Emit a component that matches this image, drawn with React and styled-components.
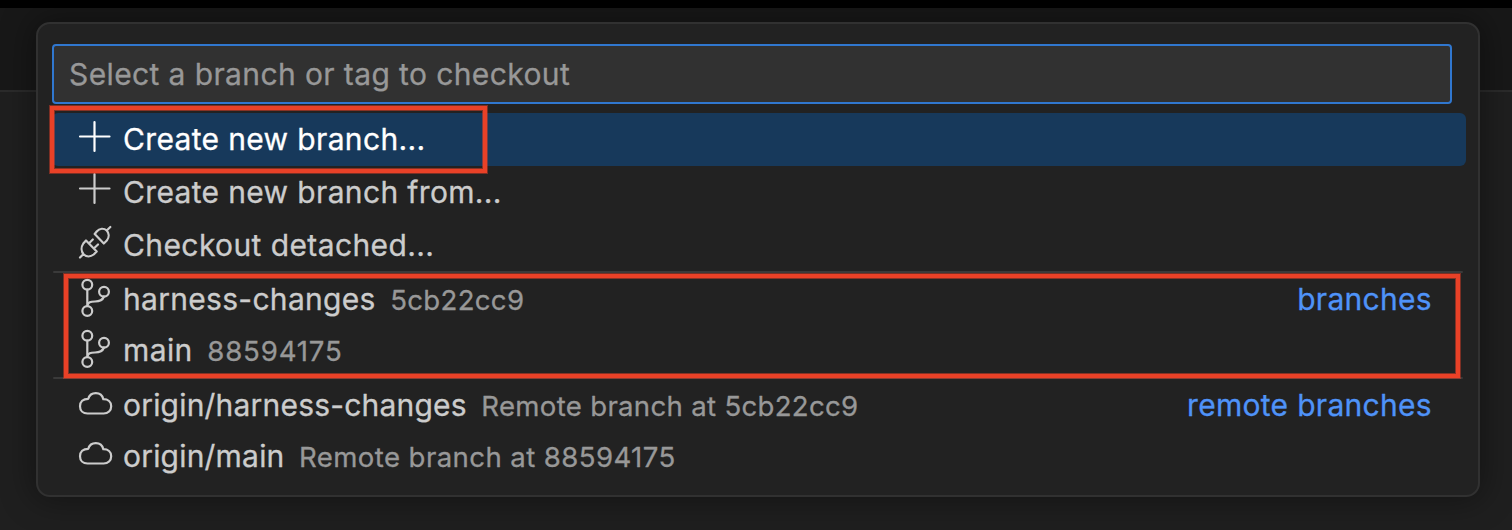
import React from "react";
import styled, { createGlobalStyle } from "styled-components";

const GlobalStyle = createGlobalStyle`
  * { box-sizing: border-box; }
  body {
    margin: 0;
    background: #1f1f1f;
    font-family: Inter, "Liberation Sans", sans-serif;
    font-kerning: normal;
    -webkit-text-stroke: 0.3px currentColor;
  }
`;

const Window = styled.div`
  position: relative;
  height: 530px;
  overflow: hidden;
  background: #1f1f1f;
`;

const TopEdge = styled.div`
  height: 8px;
  background: #000;
`;

const TitleBar = styled.div`
  height: 84px;
  background: #181818;
  border-bottom: 2px solid #2b2b2b;
`;

const Picker = styled.section`
  position: absolute;
  top: 22px;
  left: 36px;
  width: 1444px;
  height: 475px;
  padding: 20px 12px 0 14px;
  background: #222222;
  border: 2px solid #313131;
  border-radius: 14px;
  box-shadow: 0 0 32px 4px rgba(0, 0, 0, 0.36);
`;

const SearchBox = styled.div`
  display: flex;
  align-items: center;
  width: 1400px;
  height: 60px;
  padding: 0 15px;
  background: #313131;
  border: 2px solid #3077cf;
  border-radius: 4px;
  color: #989898;
  font-size: 30px;
  letter-spacing: 0.39px;
`;

const List = styled.div`
  display: flex;
  flex-direction: column;
  margin-top: 9px;
`;

const Row = styled.div`
  display: flex;
  align-items: flex-start;
  height: ${(p) => p.$height}px;
  padding: 0 34px 0 26px;
  border-radius: 6px;
  background: ${(p) => (p.$active ? "#17395b" : "transparent")};
  color: ${(p) => (p.$active ? "#ffffff" : "#cccccc")};
`;

const Separator = styled.div`
  height: 2px;
  margin-left: 1px;
  margin-right: 3px;
  background: #3a3a3a;
  border-radius: 2px;
`;

const Icon = styled.svg`
  flex: none;
  width: 35px;
  height: 44px;
  margin-right: 10px;
  margin-top: ${(p) => p.$drop || 0}px;
  fill: none;
  stroke: currentColor;
  stroke-width: 2.2;
  stroke-linejoin: round;
  stroke-linecap: round;
`;

const Label = styled.span`
  font-size: 30px;
  line-height: 52px;
  letter-spacing: ${(p) => p.$track ?? 0.35}px;
  white-space: pre;
`;

const Description = styled.span`
  margin-left: 14.5px;
  color: #989898;
  font-size: 27.6px;
  line-height: 54px;
  letter-spacing: ${(p) => p.$track ?? 0.3}px;
  white-space: pre;
`;

const Group = styled.span`
  margin-left: auto;
  color: #4f93f8;
  font-size: 30px;
  line-height: 52px;
  letter-spacing: 0.3px;
`;

const Highlight = styled.div`
  position: absolute;
  top: ${(p) => p.$top}px;
  left: ${(p) => p.$left}px;
  width: ${(p) => p.$width}px;
  height: ${(p) => p.$height}px;
  border: 4px solid #e94127;
  box-shadow: 0 0 0 1px rgba(233, 65, 39, 0.45),
    inset 0 0 0 1px rgba(233, 65, 39, 0.5);
`;

const PlusIcon = ({ drop }) => (
  <Icon viewBox="0 0 35 44" $drop={drop}>
    <path d="M16.500 7v29M2 21.500h29.500" />
  </Icon>
);

const PlugIcon = ({ drop }) => (
  <Icon viewBox="0 0 35 44" $drop={drop}>
    <path d="M2 37.5L5.500 34M8 20.500L18.700 31.500L15.700 34.500C12.500 37 8.500 37 5.800 34.500C3 31.500 3 27 5.300 23.500ZM10.800 23.500L14.800 19.500M15.800 28.500L20 24.500M16.700 14L25.800 23.500L28.800 20.500C31.500 17 31 13 28.700 10.500C26 8 21.500 8 18.700 11.500ZM28.700 10.500L32.300 7" />
  </Icon>
);

const BranchIcon = ({ drop }) => (
  <Icon viewBox="0 0 35 44" $drop={drop}>
    <circle cx="9.300" cy="8.700" r="4.900" />
    <circle cx="9.300" cy="35" r="4.900" />
    <circle cx="26" cy="15.700" r="4.900" />
    <path d="M9.300 13.500V30M9.300 30C10 26 12.500 25.500 17 25.500C22 25.500 24.500 24.500 26 20.500" />
  </Icon>
);

const CloudIcon = ({ drop }) => (
  <Icon viewBox="0 0 35 44" $drop={drop}>
    <path d="M9.500 31.500C5 31.500 2 28.500 2 24.200C2 19.800 5 16.800 10.300 16.800C11.300 13.200 14 11.200 17.800 11.200C21.500 11.200 24.500 13.500 25.300 17.200C30 17.200 33.200 20 33.200 24.200C33.200 28.500 30 31.500 25.700 31.500Z" />
  </Icon>
);

export default function App() {
  return (
    <>
      <GlobalStyle />
      <Window>
        <TopEdge />
        <TitleBar />
        <Picker>
          <SearchBox>Select a branch or tag to checkout</SearchBox>
          <List>
            <Row $height={53} $active>
              <PlusIcon drop={2} />
              <Label>Create new branch...</Label>
            </Row>
            <Row $height={53}>
              <PlusIcon drop={1} />
              <Label>Create new branch from...</Label>
            </Row>
            <Row $height={52}>
              <PlugIcon drop={1} />
              <Label $track={0.4}>Checkout detached...</Label>
            </Row>
            <Separator />
            <Row $height={51}>
              <BranchIcon drop={3} />
              <Label $track={0.3}>harness-changes</Label>
              <Description>5cb22cc9</Description>
              <Group>branches</Group>
            </Row>
            <Row $height={53}>
              <BranchIcon drop={3} />
              <Label $track={0.4}>main</Label>
              <Description $track={0.85}>88594175</Description>
            </Row>
            <Separator />
            <Row $height={51}>
              <CloudIcon drop={3} />
              <Label $track={0.2}>origin/harness-changes</Label>
              <Description>Remote branch at 5cb22cc9</Description>
              <Group>remote branches</Group>
            </Row>
            <Row $height={53}>
              <CloudIcon drop={2} />
              <Label $track={0.2}>origin/main</Label>
              <Description $track={0.4}>Remote branch at 88594175</Description>
            </Row>
          </List>
        </Picker>
        <Highlight $left={50} $top={106} $width={437} $height={67} />
        <Highlight $left={64} $top={274} $width={1396} $height={104} />
      </Window>
    </>
  );
}
